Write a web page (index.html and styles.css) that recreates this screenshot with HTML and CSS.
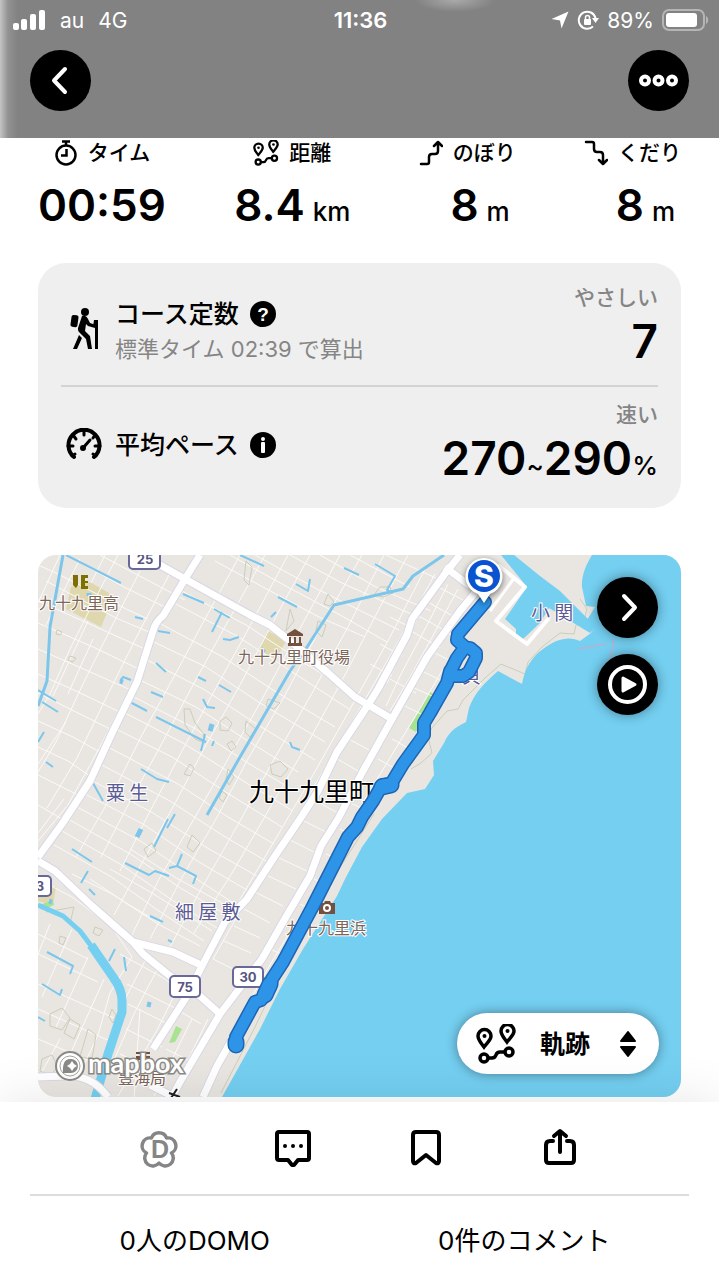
FILE: index.html
```html
<!DOCTYPE html>
<html lang="ja">
<head>
    <meta charset="UTF-8">
    <meta name="viewport" content="width=device-width, initial-scale=1.0">
    <title>活動日記</title>
    <link rel="stylesheet" href="styles.css">
</head>
<body>
    <svg class="defs" width="0" height="0" aria-hidden="true">
        <symbol id="icon-route" viewBox="0 0 40 40">
            <g fill="none" stroke="currentColor" stroke-width="3.5">
                <path d="M8 23C5 19 2 16 2 12a6 6 0 0 1 13 0c0 4-4 7-7 11z" />
                <path d="M31 18c-3-4-6-7-6-11a6 6 0 0 1 13 0c0 4-4 7-7 11z" />
                <circle cx="8" cy="34" r="4" />
                <circle cx="33" cy="28" r="4" />
                <path d="M12 34h4c6 0 2-6 8-6h5" />
            </g>
            <circle cx="8.5" cy="12" r="2" fill="currentColor" />
            <circle cx="31.5" cy="7" r="2" fill="currentColor" />
        </symbol>
    </svg>

    <header class="header">
        <div class="status-bar">
            <div class="status-left">
                <svg width="34" height="22" viewBox="0 0 34 22" fill="#fff">
                    <rect x="1" y="14" width="6" height="7" rx="2" />
                    <rect x="9" y="10" width="6" height="11" rx="2" />
                    <rect x="18" y="5" width="6" height="16" rx="2" />
                    <rect x="27" y="1" width="6" height="20" rx="2" />
                </svg>
                <span>au</span>
                <span>4G</span>
            </div>
            <div class="status-time">11:36</div>
            <div class="status-right">
                <svg width="18" height="18" viewBox="0 0 18 18" fill="#fff">
                    <path d="M17.5 .5L10.5 17.5L9 9.5L.5 8z" />
                </svg>
                <svg width="22" height="20" viewBox="0 0 22 20" fill="none" stroke="#fff" stroke-width="2">
                    <path d="M18.5 8A8.5 8.5 0 1 0 16 16.5" />
                    <path d="M15 8h7l-3.5 5z" fill="#fff" stroke="none" />
                    <rect x="7" y="9" width="7" height="6" rx="1" fill="#fff" stroke="none" />
                    <path d="M8.5 10V7.5a2 2 0 0 1 4 0V10" stroke-width="1.5" />
                </svg>
                <span>89%</span>
                <svg width="47" height="22" viewBox="0 0 47 22">
                    <rect x="1" y="1" width="41" height="20" rx="6" fill="none" stroke="#b5b5b5" stroke-width="2" />
                    <rect x="4" y="4" width="31" height="14" rx="3" fill="#fff" />
                    <path d="M44 7c3 2 3 6 0 8z" fill="#b5b5b5" />
                </svg>
            </div>
        </div>
        <div class="header-buttons">
            <button class="round-button" aria-label="戻る">
                <svg width="61" height="61" viewBox="0 0 61 61" fill="none" stroke="#fff" stroke-width="4" stroke-linecap="round" stroke-linejoin="round">
                    <path d="M35 19L24 30.5L35 42" />
                </svg>
            </button>
            <button class="round-button" aria-label="メニュー">
                <svg width="61" height="61" viewBox="0 0 61 61" fill="none" stroke="#fff" stroke-width="4">
                    <circle cx="17" cy="30.5" r="4" />
                    <circle cx="30.5" cy="30.5" r="4" />
                    <circle cx="44" cy="30.5" r="4" />
                </svg>
            </button>
        </div>
    </header>

    <main class="content">
        <dl class="stats">
            <div class="stat">
                <dt>
                    <svg width="24" height="26" viewBox="0 0 24 26" fill="none" stroke="#000" stroke-width="2.5">
                        <circle cx="12" cy="15" r="9.5" />
                        <path d="M8 1.5h8M12 2v4M12.5 9v6.5H7" />
                    </svg>
                    タイム
                </dt>
                <dd>00:59</dd>
            </div>
            <div class="stat">
                <dt>
                    <svg width="26" height="26"><use href="#icon-route" /></svg>
                    距離
                </dt>
                <dd>8.4 <small>km</small></dd>
            </div>
            <div class="stat stat-end">
                <dt>
                    <svg width="24" height="26" viewBox="0 0 24 26" fill="none" stroke="#000" stroke-width="2.5" stroke-linecap="round" stroke-linejoin="round">
                        <path d="M2 24h6q2 0 2-2v-5q0-3 3-3h3q3 0 3-3V3M15 6l4-4 4 4" />
                    </svg>
                    のぼり
                </dt>
                <dd>8 <small>m</small></dd>
            </div>
            <div class="stat stat-end">
                <dt>
                    <svg width="24" height="26" viewBox="0 0 24 26" fill="none" stroke="#000" stroke-width="2.5" stroke-linecap="round" stroke-linejoin="round">
                        <path d="M2 2h6q2 0 2 2v5q0 3 3 3h3q3 0 3 3v8M15 20l4 4 4-4" />
                    </svg>
                    くだり
                </dt>
                <dd>8 <small>m</small></dd>
            </div>
        </dl>

        <section class="card">
            <div class="card-row course">
                <svg class="card-icon" width="38" height="42" viewBox="0 0 38 42">
                    <circle cx="20" cy="5" r="4" />
                    <rect x="6" y="8" width="7" height="12" rx="2" transform="rotate(8 9 14)" />
                    <path d="M17 9c2-1 5 0 6 3l2 4 6 2-1 3-7-2-2-2-1 7 5 5 2 13h-4l-2-10-7-7c-1-1-1-2-1-4z" />
                    <path d="M14 28l3 3-5 11H8zM29 13h4v29h-3V20h-2z" />
                </svg>
                <div class="card-text">
                    <h2>コース定数
                        <button class="info-button" aria-label="コース定数について">
                            <svg width="26" height="26" viewBox="0 0 26 26">
                                <circle cx="13" cy="13" r="13" />
                                <text class="info-mark" x="13" y="20" text-anchor="middle">?</text>
                            </svg>
                        </button>
                    </h2>
                    <p>標準タイム 02:39 で算出</p>
                </div>
                <div class="card-value">
                    <span class="rating">やさしい</span>
                    <strong>7</strong>
                </div>
            </div>
            <div class="card-row pace">
                <svg class="card-icon" width="38" height="34" viewBox="0 0 38 34" fill="none" stroke="#000" stroke-linecap="round">
                    <path d="M9 29A15.5 15.5 0 1 1 29 29" stroke-width="4" />
                    <path d="M19 3v4M8 7l3 4M30 7l-2 3M3 18h5M35 18h-5M7 28l3-2M31 28l-3-2" stroke-width="3" />
                    <path d="M18 20l7-8" stroke-width="3" />
                    <circle cx="18" cy="20" r="2" fill="#000" stroke-width="2" />
                </svg>
                <div class="card-text">
                    <h2>平均ペース
                        <button class="info-button" aria-label="平均ペースについて">
                            <svg width="26" height="26" viewBox="0 0 26 26">
                                <circle cx="13" cy="13" r="13" />
                                <circle cx="13" cy="7" r="2" fill="#fff" />
                                <rect x="11" y="10" width="4" height="11" rx="1" fill="#fff" />
                            </svg>
                        </button>
                    </h2>
                </div>
                <div class="card-value">
                    <span class="rating">速い</span>
                    <strong>270<small>~</small>290<small>%</small></strong>
                </div>
            </div>
        </section>

        <section class="map" aria-label="地図">
            <svg class="map-canvas" viewBox="38 556 643 542">
                <rect class="land" x="38" y="556" width="643" height="542" />

                <!-- parks and fields -->
                <path fill="#dfd7ad" d="M71 588l19-5 24 14-13 31-35-18zM268 632l18 10-10 18-18-9zM38 888h18l-3 18-15-4z" />
                <path fill="#a8e391" d="M430 693l5 3-19 37-7-4zM176 1027l6 3-7 13-6 1zM38 906l15-4 1 4-12 5z" />

                <!-- minor streets -->
                <g class="street">
                    <path d="M38 566l18 8 70 36 22 10M66 556l60 33 45 22M38 602l45 20 62 28M46 582l70 37 40 17M38 624l55 24 52 25M38 650l50 22 45 20M38 675l38 17 50 24M38 694l28 14 50 25M38 722l35 16 32 18M38 748l30 14 25 17M38 776l40 20M38 806l24 14" />
                    <path d="M100 556l85 45M215 562l46 25 58 31 46 20M230 556l52 29 60 32 45 26M255 556l62 34 82 41M290 556l52 28 78 35M320 556l56 32 55 24M350 556l60 32M386 556l52 24" />
                    <path d="M178 590l68 36 58 38 70 41M172 603l65 34 46 30 66 43M161 625l62 33 50 33 62 37M154 643l52 25 54 36 65 39M147 661l58 30 50 33 60 37M140 681l56 27 52 34 50 31M132 697l62 32 54 35 45 27M125 714l58 30 62 39 48 29M118 731l54 27 60 39 50 31M108 748l70 37 50 33 46 27M100 765l70 37 52 34 44 26M93 782l60 32 56 36 48 27M85 795l58 30 56 38 48 28M77 808l65 35 50 34 46 30M68 820l64 36 50 34 50 29M62 832l58 33 52 36 48 30M54 846l56 31 46 33 48 32" />
                    <path d="M118 556l-26 50-22 44-20 45-12 20M140 572l-28 55-30 60-26 56-18 30M170 574l-33 63-30 60-30 62-30 50M88 622l-35 75M105 556l-14 28M60 556l-22 48M80 560l-34 66M128 693l-28 55-32 58-30 36M150 648l-18 42M93 640l-25 55M38 765l28-42M64 800l-26 34" />
                    <path d="M240 556l-34 62-30 56-34 62-30 60-36 62M265 556l-38 68-34 62-32 60-34 62-26 50M288 556l-44 82-32 58-30 56-34 64-28 56M310 556l-30 54-40 76-34 60-32 60-32 58-28 52M340 556l-36 66-44 82-32 56-34 60-36 62-28 58M362 556l-38 66-40 76-36 62-32 60-36 62-30 58M384 556l-35 70-38 70-38 66-33 60-40 70-30 56M408 556l-28 52-34 66-36 66-36 62-42 72-38 60M425 570l-36 70-40 72-36 64-34 58-40 68M435 575l-38 70-38 66-40 68-30 54-50 80" />
                    <path d="M396 650l-35 62-36 62-40 64-38 62-34 60M390 618l16 8M380 645l22 12M370 665l22 12M345 738l24 13M334 758l24 14M322 779l26 13M312 800l26 14M300 820l28 14M288 840l30 15M277 858l30 14M266 876l30 14M255 893l28 14M244 910l26 14M234 927l26 12M224 942l27 12M213 960l28 14M403 706l22 11M412 688l20 9M422 672l18 9M435 654l18 9M447 634l16 8M408 630l32 19M417 616l34 19M426 602l32 18M438 588l33 17M390 680l26 14M392 740l16 9M378 760l18 10M364 782l18 10M350 804l18 8M340 830l18 9M326 855l18 8M314 880l18 8M300 905l17 8M286 926l18 9M270 950l18 8" />
                    <path d="M437 580l-20 40-20 42-10 22M448 585l-23 45-24 45-15 32M458 590l-28 52-22 40-18 30M443 670l-22 38-22 36-34 56-30 54-26 48-38 62-34 60" />
                    <path d="M38 880l34 18 40 30 20 30-22 36-12 42-14 30M38 935l50 25M38 955l60 28M38 985l76 34M38 1010l72 32M38 1040l66 28M50 925l-12 30M72 930l-30 68M88 958l-32 70M104 980l-36 80M60 1040l-22 40M120 955l40 22 30 20M127 985l44 22 30 18M128 1005l40 20M126 1030l36 18M120 1055l35 16M116 1072l60 25M160 965l-26 50-26 60M180 985l-24 48-38 64M146 960l-22 42M192 1020l-38 77M208 1020l-34 70M140 1010l-6 90M166 1050l30 15M72 875l40 20 46 30 42 22M90 880l36 24 34 20M110 870l42 24 60 38M130 850l48 30 44 24" />
                </g>

                <!-- wooded outlines -->
                <path class="wood" d="M184 710l6 0 5 14 8 10 2 10-10-4-10-14zM220 722l6-4 6 6-4 8-8-1zM227 745l5-3 4 6-5 4zM246 562l6 6-3 18-5-5zM290 610l4 12-8 10zM318 622l8 4-4 12-6-6zM328 595l6 8-4 4-6-2zM268 700l12 4-6 6-8-3zM246 722l10 8-6 8-5-5zM270 766l10-4 8 8-7 8-9-3zM190 765l-6 10 6 2 4-8zM228 770l6 8-5 8-3-6zM222 792l5 4-4 7-4-4zM70 657l6 2-3 4-5-2zM57 631l5 2-2 3-4-1zM192 836l8 8-7 9-6-5zM144 850l8-6 4 8-8 6zM46 913l28-5-4 16-6-4M95 928l8 3-4 6-6-3zM60 937l6 2-3 7-4-2zM50 1015l12-6 8 10-8 12-12-4zM70 1020l10 6-6 14-10-6zM88 1030l8 6-4 24-12-2zM42 1060l10-4 6 12-8 8-10-4zM112 1010l4 6-3 8-4-6zM374 596l6-8 10 0 2 6-8 4z" />

                <!-- beach strip -->
                <path class="land" d="M493 556L496 600L457 672L430 736L395 788L374 818L340 886L292 972L262 1014L238 1060L218 1098H400L700 640V556z" />
                <path class="wood" d="M580 600l7 10-4 14-7 2-2 9-14-1-18 14-14 15-3 12-24-10-16 14-22 22-5 9-11 2-16 18-2 12 3 12-11 10-10 6M374 815l-35 55-28 52-32 56-24 50-34 66" />

                <!-- sea, port and river -->
                <g class="water">
                    <path d="M592 556C586 566 581 577 582 588L586 607L595 608L587 621L595 628L591 634L580 642C570 637 557 639 543 650C533 657 525 668 522 685L498 672C484 684 474 695 469 709L466 723C459 727 450 730 444 744L433 762L434 776L425 790L407 794L382 820L362 848L345 880L337 897L303 950L280 990L260 1030L222 1098H681V556z" />
                    <path d="M501 556H514L540 577L560 592L596 628L590 634L549 609L540 624L522 641L516 638V630L505 620L527 588z" />
                </g>
                <g class="river">
                    <path stroke-width="5" d="M38 906L63 917L80 932L92 948" />
                    <path stroke-width="9" d="M91 946L113 978Q122 990 122 1002V1013L108 1055L95 1100" />
                </g>

                <!-- canals -->
                <g class="canal">
                    <path stroke-width="3" d="M63 556L50 628L47 682L38 707M444 556L413 577L403 590L334 606L307 648L290 672L240 758L207 816" />
                    <path d="M66 556l55 28M156 664l10 9M183 595l21 9M214 610l16 9M222 613l-10 20M223 640l7 1 9-3M135 618l8 2M158 632l12 2M120 682l3-4 8 3M151 693l12 5M130 703l17 9M156 718l50 25M205 735l-4 17M214 742l-2 5M203 700l4 8 8 1M141 770l16 10 12 3M93 784l10 18M38 691l18 11M42 703l16 10M46 763l7 5M38 743l6-10M175 815l-8 14M240 556l24 11M344 569l15 7M375 565l20 12-8 14 6 3M296 585l12 7 2-12M278 598l19 10M271 618l5-5M290 743l2 5 8 3M168 820l-14 28M72 850l20 13M88 872l-7 12M125 864l24 12 6-4 14 5M182 855l-5 12-8 2M177 867l19 10-3 8M150 917l13 6M115 950l-6 12M124 958l2 14M47 953l26 14-3 8M42 985l18 11 2-6M89 890l6 6M168 941l4 2M38 1018l7 4M219 686l12 7M198 678l8 4" />
                    <path stroke-width="5" d="M137 838l4-8M212 725l-2 7M147 1005l4 1M120 682l3 1M262 652l2-2M89 594l0 3M49 902l3 1" />
                </g>
                <path d="M578 650l28-5M613 640v8l-3 12" fill="none" stroke="#a9b7d8" stroke-width="2" />

                <!-- main roads -->
                <g class="road-case">
                    <path d="M200 556L185 580L163 617Q156 622 153 632L137 683L113 732L90 782L62 825L38 858" />
                    <path d="M135 552L185 580L250 616L270 626L300 650L327 673L355 698L392 720" />
                    <path d="M460 556L447 572L412 620L407 636L378 690L368 706L337 753L318 792L300 820L273 860L247 900L225 923L203 965L187 997L153 1050" />
                    <path d="M482 585L460 612L427 658L392 720L363 772L338 820L321 847L310 877L283 923L262 960L220 1015L180 1083L172 1098" />
                    <path d="M38 862L55 872L92 907L133 943L143 955L170 977L200 997L220 1015M133 943L153 948L173 953L203 967" />
                    <path d="M445 568L470 587M38 1078L67 1077Q92 1076 108 1098M150 1086L174 1098M203 1098L217 1067L238 1030" />
                </g>
                <g class="road">
                    <path d="M200 556L185 580L163 617Q156 622 153 632L137 683L113 732L90 782L62 825L38 858" />
                    <path d="M135 552L185 580L250 616L270 626L300 650L327 673L355 698L392 720" />
                    <path d="M460 556L447 572L412 620L407 636L378 690L368 706L337 753L318 792L300 820L273 860L247 900L225 923L203 965L187 997L153 1050" />
                    <path d="M482 585L460 612L427 658L392 720L363 772L338 820L321 847L310 877L283 923L262 960L220 1015L180 1083L172 1098" />
                    <path d="M38 862L55 872L92 907L133 943L143 955L170 977L200 997L220 1015M133 943L153 948L173 953L203 967" />
                    <path d="M445 568L470 587M38 1078L67 1077Q92 1076 108 1098M150 1086L174 1098M203 1098L217 1067L238 1030" />
                    <path stroke-width="4" d="M498 566L525 588L496 622L527 645L549 619" />
                    <path stroke-width="3" d="M515 578L490 612M374 803L330 880L272 984" />
                </g>

                <!-- route shields -->
                <g class="shield">
                    <rect x="129" y="548" width="31" height="22" rx="4" />
                    <rect x="21" y="877" width="30" height="20" rx="4" />
                    <rect x="170" y="977" width="30" height="21" rx="4" />
                    <rect x="233" y="968" width="30" height="20" rx="4" />
                    <text x="145" y="565">25</text>
                    <text x="40" y="892">3</text>
                    <text x="185" y="993">75</text>
                    <text x="248" y="983">30</text>
                </g>

                <!-- place names under the track -->
                <g class="place">
                    <text x="106" y="801">粟 生</text>
                    <text x="175" y="920">細 屋 敷</text>
                    <text x="531" y="621">小 関</text>
                    <text x="462" y="684">貝</text>
                </g>
                <g class="poi">
                    <text x="39" y="610">九十九里高</text>
                    <text x="238" y="664">九十九里町役場</text>
                    <text x="286" y="935">九十九里浜</text>
                    <text x="118" y="1085">豊海局</text>
                </g>
                <text class="town" x="249" y="802">九十九里町</text>

                <path fill="#7d7000" d="M73 576h5v10l-2 3-3-3zM81 576h7v3h-3v3h3v2h-3v3h3v3h-7z" />
                <path fill="#74513f" d="M287 635l8-5 8 5v2h-16zM289 638h2v6h-2zM294 638h2v6h-2zM299 638h2v6h-2zM288 644h14v3h-14z" />
                <path fill="#74513f" d="M319 904h5l1-2h5l1 2h4v11h-16zM136 1053h14v2h-14zM136 1057h14v4h-5v6h-4v-6h-5z" />
                <circle cx="327" cy="909" r="3" fill="none" stroke="#fff" stroke-width="2" />
                <path d="M169 1094l11 4M171 1099l6-9" stroke="#222" stroke-width="2" />

                <!-- recorded track -->
                <g class="track-case">
                    <path d="M485 603L458 635L457 641L465 648L457 659L450 673M465 649H470L476 654V659L469 673L463 677H451M450 672L447 684L430 714L424 724L424 736L403 765L391 785L382 786L373 802L362 818L357 828L348 838L313 907L283 963L272 980L270 988L261 1001L255 1003L236 1038V1047" />
                    <path stroke-width="17" d="M391 786L382 788M270 985L265 996M236 1043V1046" />
                </g>
                <g class="track">
                    <path d="M485 603L458 635L457 641L465 648L457 659L450 673M465 649H470L476 654V659L469 673L463 677H451M450 672L447 684L430 714L424 724L424 736L403 765L391 785L382 786L373 802L362 818L357 828L348 838L313 907L283 963L272 980L270 988L261 1001L255 1003L236 1038V1047" />
                    <path stroke-width="14" d="M391 786L382 788M270 985L265 996M236 1043V1046" />
                </g>

                <!-- start pin -->
                <path class="pin-shape" d="M484 604L478 595A18.5 18.5 0 1 1 490 595z" />
                <circle cx="484" cy="577" r="16" fill="#0a53d0" />
                <text class="pin-text" x="484" y="588" text-anchor="middle">S</text>

                <!-- map provider -->
                <g class="provider">
                    <circle cx="70" cy="1067" r="14" fill="#fff" stroke="#8a8a86" stroke-width="2" />
                    <circle cx="70" cy="1067" r="10" fill="#fff" stroke="#a5a5a2" stroke-width="1" />
                    <path d="M63 1074q-1-15 8-14a7 7 0 1 1 0 14z" fill="#8a8a86" />
                    <path d="M72 1062l2 3 3 2-3 2-2 3-2-3-3-2 3-2z" fill="#fff" />
                    <text x="88" y="1074">mapbox</text>
                </g>
            </svg>

            <div class="map-buttons">
                <button class="round-button raised" aria-label="地図を開く">
                    <svg width="61" height="61" viewBox="0 0 61 61" fill="none" stroke="#fff" stroke-width="4" stroke-linecap="round" stroke-linejoin="round">
                        <path d="M27 19L38 30.5L27 42" />
                    </svg>
                </button>
                <button class="round-button raised" aria-label="再生">
                    <svg width="61" height="61" viewBox="0 0 61 61">
                        <circle cx="30.5" cy="30.5" r="17.5" fill="none" stroke="#fff" stroke-width="4" />
                        <path d="M26 24L38 30.5L26 37z" fill="#fff" stroke="#fff" stroke-width="3" stroke-linejoin="round" />
                    </svg>
                </button>
            </div>

            <div class="layer-picker">
                <svg class="layer-icon" width="40" height="40"><use href="#icon-route" /></svg>
                <select aria-label="表示する線">
                    <option>軌跡</option>
                </select>
                <svg class="layer-arrows" width="18" height="28" viewBox="0 0 18 28" stroke="#000" stroke-width="2" stroke-linejoin="round">
                    <path d="M9 2l7 9H2zM9 26l7-9H2z" />
                </svg>
            </div>
        </section>
    </main>

    <footer class="footer">
        <nav class="actions">
            <button class="domo" aria-label="DOMOを送る">
                <svg width="40" height="40" viewBox="0 0 40 40">
                    <path fill="none" stroke="currentColor" stroke-width="3.5" stroke-linejoin="round" d="M12.5 10A8 8 0 0 1 27.500 10A8 8 0 0 1 32.500 25A8 8 0 0 1 20 35A8 8 0 0 1 7.500 25A8 8 0 0 1 12.500 10z" />
                    <text class="domo-mark" x="21" y="30" text-anchor="middle">D</text>
                </svg>
            </button>
            <button aria-label="コメント">
                <svg width="40" height="40" viewBox="0 0 40 40" fill="none" stroke="#000" stroke-width="4" stroke-linejoin="round">
                    <path d="M6 4h28q2 0 2 2v24q0 2-2 2h-9l-4 5h-2l-4-5H6q-2 0-2-2V6q0-2 2-2z" />
                    <path d="M12 18h0M20 18h0M28 18h0" stroke-linecap="round" />
                </svg>
            </button>
            <button aria-label="保存">
                <svg width="40" height="40" viewBox="0 0 40 40" fill="none" stroke="#000" stroke-width="4" stroke-linejoin="round">
                    <path d="M10 4h20q3 0 3 3v26q0 3-3 2L20 27L10 35q-3 1-3-2V7q0-3 3-3z" />
                </svg>
            </button>
            <button aria-label="共有">
                <svg width="40" height="40" viewBox="0 0 40 40" fill="none" stroke="#000" stroke-width="4" stroke-linecap="round" stroke-linejoin="round">
                    <path d="M13 13H10q-4 0-4 4v15q0 3 3 3h22q3 0 3-3V17q0-4-4-4h-3M20 24V4M14 8l6-5 6 5" />
                </svg>
            </button>
        </nav>
        <div class="counts">
            <a href="#domo">0人のDOMO</a>
            <a href="#comments">0件のコメント</a>
        </div>
    </footer>
</body>
</html>
```

FILE: styles.css
```css
* {
    margin: 0;
    padding: 0;
    box-sizing: border-box;
}

body {
    font-family: Inter, 'Noto Sans CJK JP', sans-serif;
    background: #fff;
    color: #000;
    min-height: 100vh;
    display: flex;
    flex-direction: column;
}

svg {
    display: block;
    flex: none;
}

button {
    border: none;
    background: none;
    color: inherit;
    cursor: pointer;
}

.defs {
    position: absolute;
}

/* Header */
.header {
    background:
        radial-gradient(ellipse 40px 12px at 455px 0, #aaa, rgba(130, 130, 130, 0)),
        linear-gradient(90deg, #c4c4c4 0, #929292 8px, #828282 18px);
    padding-bottom: 27px;
}

.status-bar {
    display: grid;
    grid-template-columns: 1fr auto 1fr;
    align-items: center;
    height: 40px;
    padding: 0 10px 0 12px;
    color: #fff;
    font-size: 21px;
}

.status-left,
.status-right {
    display: flex;
    align-items: center;
    gap: 8px;
}

.status-left {
    gap: 14px;
}

.status-time {
    font-size: 22px;
    font-weight: 600;
}

.status-right {
    justify-content: flex-end;
}

.header-buttons {
    display: flex;
    justify-content: space-between;
    padding: 10px 30px 0;
}

.round-button {
    width: 61px;
    height: 61px;
    border-radius: 50%;
    background: #000;
}

.raised {
    box-shadow: 0 0 12px rgba(0, 0, 0, 0.4);
}

/* Stats */
.content {
    flex: 1;
    padding: 1px 38px 3px;
}

.stats {
    display: flex;
    justify-content: space-between;
    margin-bottom: 27px;
}

.stat {
    display: flex;
    flex-direction: column;
    align-items: center;
    gap: 14px;
}

.stat-end {
    align-items: flex-end;
}

.stat dt {
    display: flex;
    align-items: center;
    gap: 10px;
    font-size: 21px;
    font-weight: 500;
    line-height: 28px;
}

.stat dd,
.card-value strong {
    font-size: 46px;
    font-weight: 600;
    line-height: 48px;
    white-space: nowrap;
}

.stat dd {
    display: flex;
    align-items: baseline;
    gap: 8px;
    font-size: 44px;
}

.stat-end dd {
    padding-right: 6px;
}

.stat small,
.card-value small {
    font-size: 26px;
    font-weight: 500;
}

/* Course card */
.card {
    background: #efefef;
    border-radius: 28px;
    padding: 0 23px;
    margin-bottom: 47px;
}

.card-row {
    display: flex;
    align-items: center;
    gap: 12px;
    padding-left: 4px;
}

.course {
    height: 122px;
}

.course .card-icon {
    margin-top: 8px;
}

.course .card-text {
    padding-top: 14px;
}

.pace {
    height: 123px;
    border-top: 2px solid #d3d3d3;
    padding-bottom: 6px;
}

.card-text {
    flex: 1;
}

.card-text h2 {
    display: flex;
    align-items: center;
    gap: 11px;
    font-size: 25px;
    font-weight: 500;
    line-height: 36px;
}

.card-text p {
    color: #858585;
    font-size: 22px;
    line-height: 34px;
}

.info-mark {
    fill: #fff;
    font-size: 19px;
    font-weight: 700;
}

.card-value {
    display: flex;
    flex-direction: column;
    align-items: flex-end;
    gap: 4px;
}

.rating {
    color: #858585;
    font-size: 21px;
    font-weight: 500;
    line-height: 30px;
}

/* Map */
.map {
    position: relative;
    border-radius: 18px;
    overflow: hidden;
}

.map-canvas {
    width: 100%;
    height: auto;
    font-family: 'Noto Sans CJK JP', sans-serif;
}

.land {
    fill: #e9e6e1;
}

.street,
.road,
.road-case,
.wood,
.river,
.canal {
    fill: none;
    stroke-linejoin: round;
}

.street {
    stroke: #fbfaf9;
    stroke-width: 1;
}

.wood {
    stroke: #c9ceb9;
    stroke-width: 1;
}

.water {
    fill: #74cff1;
}

.river {
    stroke: #74cff1;
}

.canal {
    stroke: #7cc6ec;
    stroke-width: 2;
}

.road-case {
    stroke: #d8d7e6;
    stroke-width: 9;
}

.road {
    stroke: #fff;
    stroke-width: 7;
}

.shield rect {
    fill: #fff;
    stroke: #68689a;
    stroke-width: 2;
}

.shield text {
    fill: #55557f;
    font-family: Inter, sans-serif;
    font-size: 13px;
    font-weight: 700;
    text-anchor: middle;
}

.place text,
.poi text,
.town {
    paint-order: stroke;
    stroke: #fff;
    stroke-width: 2;
}

.place {
    fill: #5b5b95;
    font-size: 19px;
}

.poi {
    fill: #7c6559;
    font-size: 16px;
}

.town {
    font-size: 25px;
}

.track,
.track-case {
    fill: none;
    stroke: #2d94e8;
    stroke-width: 11;
    stroke-linecap: round;
    stroke-linejoin: round;
}

.track-case {
    stroke: #1d65b4;
    stroke-width: 14;
}

.pin-shape {
    fill: #fff;
    filter: drop-shadow(0 2px 3px rgba(0, 0, 0, 0.5));
}

.pin-text {
    fill: #fff;
    font-family: Inter, sans-serif;
    font-size: 30px;
    font-weight: 800;
}

.provider text {
    fill: #fff;
    stroke: #8a8a86;
    stroke-width: 3;
    paint-order: stroke;
    font-family: Lato, sans-serif;
    font-size: 27px;
    font-weight: 700;
}

.map-buttons {
    position: absolute;
    top: 22px;
    right: 23px;
    display: flex;
    flex-direction: column;
    gap: 16px;
}

.layer-picker {
    position: absolute;
    right: 22px;
    bottom: 23px;
}

.layer-picker select {
    appearance: none;
    width: 202px;
    height: 61px;
    padding-left: 83px;
    border: none;
    border-radius: 31px;
    background: #fff;
    box-shadow: 0 0 12px rgba(0, 0, 0, 0.4);
    color: #000;
    font-family: inherit;
    font-size: 25px;
    font-weight: 700;
}

.layer-icon,
.layer-arrows {
    position: absolute;
    top: 11px;
    left: 19px;
    pointer-events: none;
}

.layer-arrows {
    top: 17px;
    left: auto;
    right: 22px;
}

/* Bottom bar */
.footer {
    position: relative;
    background: #fff;
    box-shadow: 0 0 50px rgba(0, 0, 0, 0.1);
    padding: 0 30px;
}

.actions {
    display: flex;
    justify-content: space-around;
    align-items: center;
    height: 94px;
    padding: 0 62px;
    border-bottom: 2px solid #ddd;
}

.domo {
    color: #858585;
}

.domo-mark {
    fill: currentColor;
    font-size: 25px;
    font-weight: 900;
}

.counts {
    display: grid;
    grid-template-columns: 1fr 1fr;
    height: 84px;
    align-items: center;
    text-align: center;
}

.counts a {
    color: inherit;
    font-size: 26px;
    text-decoration: none;
}
```
